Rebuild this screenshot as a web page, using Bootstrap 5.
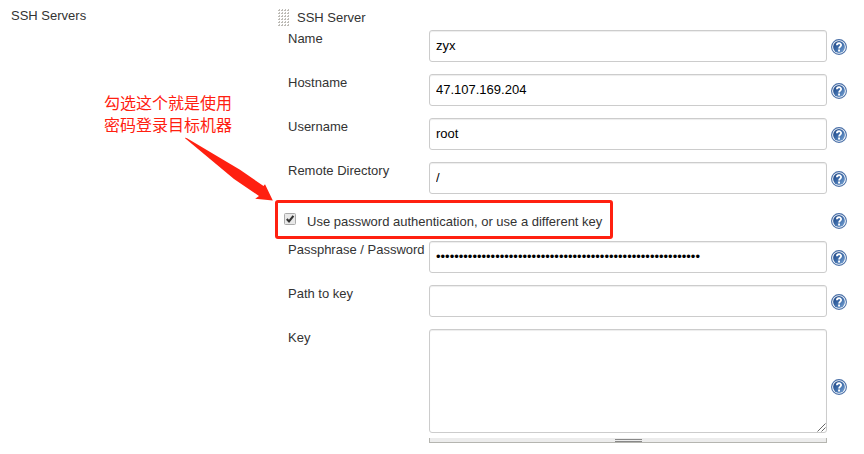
<!DOCTYPE html>
<html lang="en">
<head>
<meta charset="utf-8">
<meta name="viewport" content="width=device-width, initial-scale=1">
<title>SSH Servers</title>
<link href="https://cdn.jsdelivr.net/npm/bootstrap@5.3.0/dist/css/bootstrap.min.css" rel="stylesheet">
<style>
body{font:13px/18px "Liberation Sans",Arial,"Noto Sans CJK SC",sans-serif;color:#333;background:#fff;overflow:hidden}
.section-label{width:278px;padding:7px 0 0 11px}
.server-head{height:30px;padding-top:9px;gap:7px}
.field-row{height:44px;padding-left:10px}
.field-label{width:141px;white-space:nowrap}
.field-row .form-control{width:398px;height:32px;padding:0 6px 2px;border:1px solid #ccc;border-radius:3px;font-size:13px;line-height:18px;color:#000;box-shadow:inset 0 1px 1px rgba(0,0,0,.075)}
.help-icon{width:16px;height:16px;margin:9px 0 0 4px;flex:none}
.auth-row{height:35px;padding-left:6px}
.auth-row .help-icon{margin-top:7px}
.tick{width:12px;height:12px;margin-top:7px;flex:none}
.auth-text{margin:7px 0 0 11px;width:520px}
.key-row{height:122px}
.field-row textarea.form-control{height:104px;resize:none}
.key-row .help-icon{margin-top:50px}
.grip{right:1px;bottom:1px}
.resizer{height:5px;margin-top:5px;background:#ececec;border-left:1px solid #b5b5b0;border-right:1px solid #b5b5b0;border-bottom:1px solid #b5b5b0}
.resizer span{width:27px;height:3px;margin-top:1px;border-top:1px solid #888;border-bottom:1px solid #888}
.note{left:104px;top:91px;font:16px/22px "Noto Sans CJK SC",sans-serif;color:#ff2010;white-space:nowrap}
.highlight{left:275px;top:200px;width:338px;height:39px;border:3px solid #ff2010;border-radius:3px}
.arrow{left:180px;top:130px}
</style>
<script src="https://cdn.jsdelivr.net/npm/bootstrap@5.3.0/dist/js/bootstrap.bundle.min.js"></script>
</head>
<body>
<svg class="position-absolute" width="0" height="0">
<defs>
<linearGradient id="blue" x1="0" y1="0" x2="1" y2="1"><stop offset="0" stop-color="#1f4480"/><stop offset=".4" stop-color="#3563a2"/><stop offset="1" stop-color="#7ba6d6"/></linearGradient>
<pattern id="dots" width="3" height="3" patternUnits="userSpaceOnUse"><path d="M0 1h1v-1h1v2h-2z" fill="#bdbbb6"/></pattern>
</defs>
<symbol id="help" viewBox="0 0 16 16"><circle cx="8" cy="8" r="7.4" fill="#fff" stroke="#4a70a8" stroke-width="1.1"/><circle cx="8" cy="8" r="5.9" fill="url(#blue)"/><path d="M5.9 6.3C5.9 3.6 10.1 3.6 10.1 6c0 1.6-2 1.6-2 3.5" fill="none" stroke="#fff" stroke-width="1.8"/><path d="M7.1 10.6h1.9v1.9H7.1z" fill="#fff"/></symbol>
</svg>
<main class="d-flex position-relative">
<div class="section-label flex-shrink-0">SSH Servers</div>
<form class="flex-shrink-0">
<div class="server-head d-flex"><svg width="12" height="18"><path d="M0 0h12v18H0z" fill="url(#dots)"/></svg><span>SSH Server</span></div>
<div class="field-row d-flex"><label class="field-label" for="name">Name</label><input class="form-control" id="name" value="zyx"><svg class="help-icon"><use href="#help"/></svg></div>
<div class="field-row d-flex"><label class="field-label" for="host">Hostname</label><input class="form-control" id="host" value="47.107.169.204"><svg class="help-icon"><use href="#help"/></svg></div>
<div class="field-row d-flex"><label class="field-label" for="user">Username</label><input class="form-control" id="user" value="root"><svg class="help-icon"><use href="#help"/></svg></div>
<div class="field-row d-flex"><label class="field-label" for="dir">Remote Directory</label><input class="form-control" id="dir" value="/"><svg class="help-icon"><use href="#help"/></svg></div>
<div class="auth-row d-flex"><svg class="tick" viewBox="0 0 12 12"><rect x=".5" y=".5" width="11" height="11" rx="1" fill="#e8e8e8" stroke="#aaa"/><path d="M2.8 6.1 5 8.4 9.4 2.8" fill="none" stroke="#333" stroke-width="2.1"/></svg><span class="auth-text">Use password authentication, or use a different key</span><svg class="help-icon"><use href="#help"/></svg></div>
<div class="field-row d-flex"><label class="field-label" for="pass">Passphrase / Password</label><input class="form-control" id="pass" value="••••••••••••••••••••••••••••••••••••••••••••••••••••••••••"><svg class="help-icon"><use href="#help"/></svg></div>
<div class="field-row d-flex"><label class="field-label" for="path">Path to key</label><input class="form-control" id="path"><svg class="help-icon"><use href="#help"/></svg></div>
<div class="field-row key-row d-flex"><label class="field-label" for="key">Key</label><div><div class="position-relative"><textarea class="form-control d-block" id="key"></textarea><svg class="grip position-absolute" width="9" height="9"><path d="M.5 8.5l8-8M4.5 8.5l4-4" stroke="#666" fill="none"/></svg></div><div class="resizer d-flex justify-content-center"><span></span></div></div><svg class="help-icon"><use href="#help"/></svg></div>
</form>
<div class="note position-absolute">勾选这个就是使用<br>密码登录目标机器</div>
<svg class="arrow position-absolute" width="96" height="74"><path d="M4.8 8Q5.5 7.4 7 8.2L60 39.8 83.5 56 85 54.3 92.8 70.5 75.2 68.8 79 66 54 49Z" fill="#ff2010"/></svg>
<div class="highlight position-absolute"></div>
</main>
</body>
</html>
